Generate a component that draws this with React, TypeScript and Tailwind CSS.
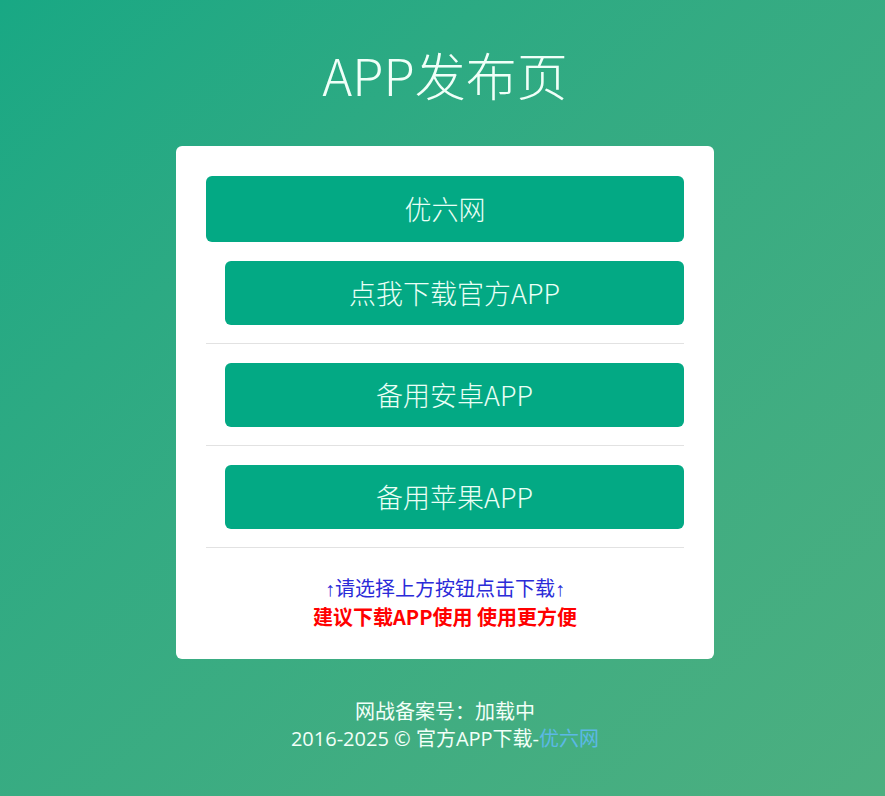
import React from "react";

const font = { fontFamily: '"Noto Sans CJK SC", "Noto Sans", sans-serif' };
const latinFirst = { fontFamily: '"Open Sans", "Noto Sans CJK SC", sans-serif' };
const arrowFont = { fontFamily: '"Liberation Sans", "Noto Sans CJK SC", sans-serif' };

const links = [
  { label: "点我下载官方APP" },
  { label: "备用安卓APP" },
  { label: "备用苹果APP" },
];

export default function App() {
  return (
    <div
      className="min-h-[796px] w-full bg-gradient-to-br from-[#18a884] to-[#4caf80] pl-[5px] flex flex-col items-center text-white"
      style={font}
    >
      <h1 className="mt-[42px] h-[64px] text-[51px] font-light leading-[64px] text-[#f0fff8]">
        APP发布页
      </h1>

      {/* main card */}
      <div className="mt-[40px] w-[538px] rounded-md bg-white px-[30px] pt-[30px] pb-[29px]">
        <div className="flex h-[66px] items-center justify-center rounded-md bg-[#03a984] text-[27px] font-light text-[#eafff6]">
          优六网
        </div>

        {links.map((l) => (
          <div key={l.label} className="border-b border-[#e2e2e2] pt-[19px] pb-[18px] pl-[19px]">
            <div className="flex h-[64px] items-center justify-center rounded-md bg-[#03a984] text-[27px] font-light text-[#eafff6]">
              {l.label}
            </div>
          </div>
        ))}

        <div className="mt-[26px] flex flex-col items-center text-[20px] leading-[27px]">
          <p className="text-[#2b2bd8]">
            <span style={arrowFont}>↑</span>请选择上方按钮点击下载<span style={arrowFont}>↑</span>
          </p>
          <p className="font-bold text-[#ff0000]">建议下载APP使用 使用更方便</p>
        </div>
      </div>

      {/* footer */}
      <div
        className="mt-[39px] flex flex-col items-center text-[20px] leading-[27px] text-[#f2fff8]"
        style={latinFirst}
      >
        <p>网战备案号：加载中</p>
        <p>
          2016-2025 © 官方APP下载-<span className="text-[#5cb8e6]">优六网</span>
        </p>
      </div>
    </div>
  );
}
